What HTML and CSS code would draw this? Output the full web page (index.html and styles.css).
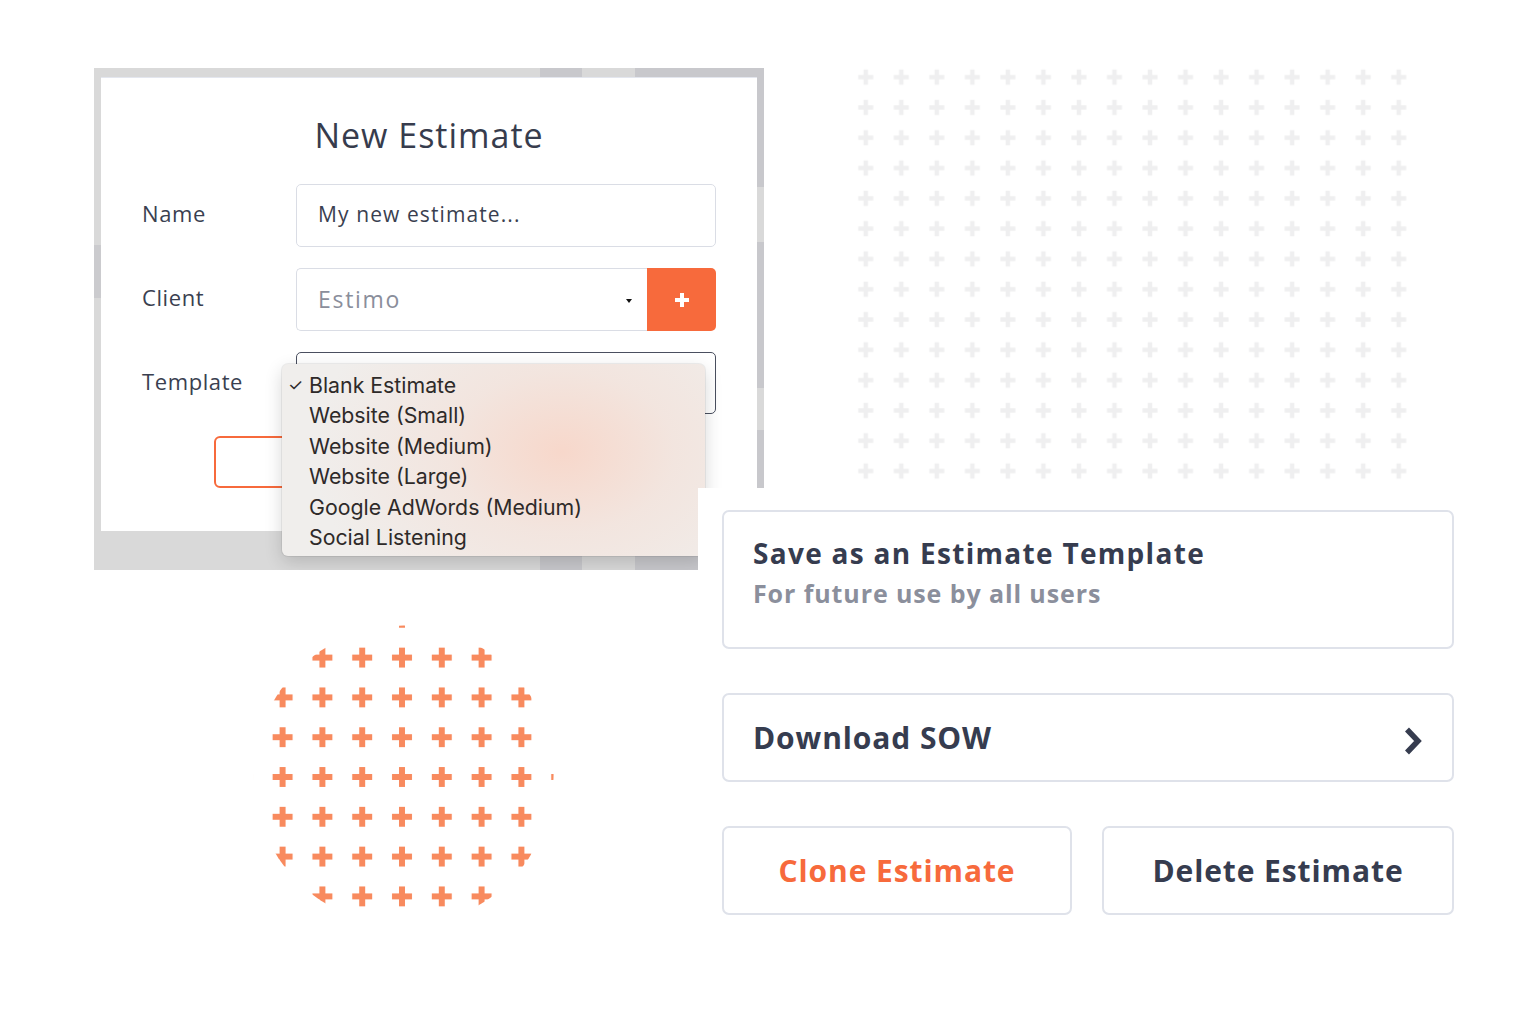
FILE: index.html
```html
<!DOCTYPE html>
<html lang="en">
<head>
<meta charset="utf-8">
<title>Estimate actions</title>
<link rel="stylesheet" href="styles.css">
</head>
<body>
<div class="stage">
  <div class="shot">
    <div class="modal">
      <h1 class="title">New Estimate</h1>
      <div class="form">
        <div class="label">Name</div>
        <div class="input">My new estimate...</div>
        <div class="label">Client</div>
        <div class="client">
          <div class="select">Estimo<span class="caret"></span></div>
          <div class="add">
            <svg width="16" height="16" viewBox="0 0 16 16"><path d="M8 1v14M1 8h14" stroke="#fff" stroke-width="4"/></svg>
          </div>
        </div>
        <div class="label">Template</div>
        <div class="tpl-field">
          <div class="tpl-select"></div>
          <ul class="menu">
            <li><span class="check">✓</span><span>Blank Estimate</span></li>
            <li><span class="check"></span><span>Website (Small)</span></li>
            <li><span class="check"></span><span>Website (Medium)</span></li>
            <li><span class="check"></span><span>Website (Large)</span></li>
            <li><span class="check"></span><span>Google AdWords (Medium)</span></li>
            <li><span class="check"></span><span>Social Listening</span></li>
          </ul>
        </div>
        <div class="actions">
          <span class="ghost"></span>
          <span class="ghost"></span>
        </div>
      </div>
    </div>
  </div>

  <svg class="grey-dots" width="569" height="424" viewBox="0 0 569 424">
    <defs>
      <pattern id="gp" width="35.53" height="30.3" patternUnits="userSpaceOnUse">
        <path d="M17.77 7.65v15M10.27 15.15h15" stroke="#efeff0" stroke-width="4.5"/>
      </pattern>
    </defs>
    <rect width="569" height="424" fill="url(#gp)"/>
  </svg>

  <div class="cards">
    <div class="card card-template">
      <div class="card-title">Save as an Estimate Template</div>
      <div class="card-sub">For future use by all users</div>
    </div>
    <div class="card card-row">
      <span class="card-label">Download SOW</span>
      <svg class="chev" width="22" height="30" viewBox="0 0 22 30"><path d="M5 3.5l11 11.5L5 26.5" fill="none" stroke="#363c4f" stroke-width="5.5"/></svg>
    </div>
    <div class="btn-row">
      <div class="card btn btn-clone">Clone Estimate</div>
      <div class="card btn btn-delete">Delete Estimate</div>
    </div>
  </div>

  <svg class="orange-dots" width="304" height="304" viewBox="0 0 304 304">
    <defs>
      <pattern id="op" x="12.7" y="12.7" width="39.8" height="39.8" patternUnits="userSpaceOnUse">
        <path d="M19.9 9.9v20M9.9 19.9h20" stroke="#f88a5e" stroke-width="6"/>
      </pattern>
      <clipPath id="oc"><circle cx="153.6" cy="150.6" r="150"/></clipPath>
    </defs>
    <rect width="304" height="304" fill="url(#op)" clip-path="url(#oc)"/>
  </svg>
</div>
</body>
</html>
```

FILE: styles.css
```css
html, body {
  margin: 0;
  padding: 0;
  background: #ffffff;
}

body {
  width: 1540px;
  height: 1024px;
  overflow: hidden;
  font-family: "Open Sans", "Noto Sans", sans-serif;
  color: #363c4f;
}

.stage {
  display: grid;
  grid-template-columns: 604px 24px 42px 84px 569px 37px;
  grid-template-rows: 420px 22px 60px auto;
  padding: 68px 0 0 94px;
}

/* ---------- screenshot of the modal ---------- */
.shot {
  grid-column: 1 / 4;
  grid-row: 1 / 4;
  position: relative;
  box-sizing: border-box;
  padding: 9px 7px 0;
  background-color: #d9d9d9;
  background-image:
    linear-gradient(to right, transparent 446px, #c8c8cc 446px, #c8c8cc 488px, transparent 488px, transparent 541px, #c8c8cc 541px),
    linear-gradient(to right, transparent 446px, #c8c8cc 446px, #c8c8cc 488px, transparent 488px, transparent 541px, #c8c8cc 541px),
    linear-gradient(to bottom, #c8c8cc 0, #c8c8cc 119px, transparent 119px, transparent 174px, #c8c8cc 174px, #c8c8cc 320px, transparent 320px, transparent 362px, #c8c8cc 362px),
    linear-gradient(to bottom, transparent 177px, #cbcbce 177px, #cbcbce 230px, transparent 230px);
  background-size: 100% 9px, 100% 39px, 7px 100%, 7px 100%;
  background-position: top left, bottom left, top right, top left;
  background-repeat: no-repeat;
  clip-path: polygon(0 0, 100% 0, 100% 420px, 604px 420px, 604px 100%, 0 100%);
}

.modal {
  box-sizing: border-box;
  width: 656px;
  height: 454px;
  padding: 36px 41px 0;
  background: #ffffff;
  border-top: 1px solid #e3e6ee;
}

.title {
  margin: 0 0 28px;
  font-weight: 400;
  font-size: 34px;
  line-height: 42px;
  letter-spacing: 1px;
  text-align: center;
  color: #373c4d;
}

.form {
  display: grid;
  grid-template-columns: 154px 420px;
  grid-template-rows: 63px 63px 63px 52px;
  row-gap: 21px;
}

.label {
  align-self: center;
  margin-top: -5px;
  font-size: 22px;
  letter-spacing: 0.6px;
  color: #3a3f50;
}

.input {
  box-sizing: border-box;
  display: flex;
  align-items: center;
  padding: 0 21px 4px;
  border: 1px solid #dadde5;
  border-radius: 5px;
  font-size: 21px;
  letter-spacing: 1.1px;
  color: #3a3f50;
}

.client {
  display: flex;
}

.select {
  flex: 1;
  box-sizing: border-box;
  display: flex;
  align-items: center;
  justify-content: space-between;
  padding: 0 15px 2px 21px;
  border: 1px solid #dadde5;
  border-right: none;
  border-radius: 5px 0 0 5px;
  font-size: 23px;
  letter-spacing: 1.7px;
  color: #8a8e9b;
}

.caret {
  width: 0;
  height: 0;
  border-left: 3.5px solid transparent;
  border-right: 3.5px solid transparent;
  border-top: 4px solid #111111;
  margin-top: 4px;
}

.add {
  width: 69px;
  display: flex;
  align-items: center;
  justify-content: center;
  background: #f76a3c;
  border-radius: 0 5px 5px 0;
}

.tpl-field {
  position: relative;
}

.tpl-select {
  box-sizing: border-box;
  height: 62px;
  border: 1.5px solid #4a4f5f;
  border-radius: 5px;
}

.menu {
  position: absolute;
  left: -14px;
  top: 12px;
  z-index: 2;
  box-sizing: border-box;
  width: 423px;
  height: 192px;
  margin: 0;
  padding: 6px 0 0;
  list-style: none;
  border-radius: 6px;
  background-color: #f0eeec;
  background-image: radial-gradient(ellipse 250px 180px at 280px 88px, rgba(248, 213, 199, 0.9), rgba(244, 223, 214, 0.6) 45%, rgba(240, 238, 236, 0) 100%);
  box-shadow: 0 0 0 1px rgba(0, 0, 0, 0.06), 0 6px 18px rgba(0, 0, 0, 0.16);
  font-family: "Inter", "Liberation Sans", sans-serif;
  font-size: 21.3px;
  line-height: 30.4px;
  color: #2e2a29;
}

.menu li {
  display: grid;
  grid-template-columns: 27px 1fr;
}

.check {
  padding-left: 6px;
  font-size: 17px;
  color: #2e2a29;
}

.actions {
  grid-column: 1 / -1;
  display: flex;
  justify-content: center;
  gap: 30px;
}

.ghost {
  box-sizing: border-box;
  width: 200px;
  height: 52px;
  border: 2px solid #f76a3c;
  border-radius: 6px;
}

/* ---------- decorative plus patterns ---------- */
.grey-dots {
  grid-column: 5;
  grid-row: 1;
  margin-top: -6px;
  display: block;
}

.orange-dots {
  grid-column: 1;
  grid-row: 4;
  margin: 55px 0 0 156px;
  display: block;
}

/* ---------- action cards ---------- */
.cards {
  grid-column: 3 / 7;
  grid-row: 3 / 5;
  display: flex;
  flex-direction: column;
  gap: 44px;
}

.card {
  box-sizing: border-box;
  border: 2px solid #dfe2ea;
  border-radius: 7px;
  background: #ffffff;
  font-weight: 700;
  color: #363c4f;
}

.card-template {
  height: 139px;
  padding: 23px 29px 0;
}

.card-title {
  font-size: 28px;
  line-height: 36px;
  letter-spacing: 1.3px;
}

.card-sub {
  margin-top: 5px;
  font-size: 25px;
  line-height: 34px;
  letter-spacing: 0.9px;
  color: #8b8f9c;
}

.card-row {
  height: 89px;
  display: flex;
  align-items: center;
  justify-content: space-between;
  padding: 0 28px 0 29px;
}

.card-label {
  font-size: 30px;
  letter-spacing: 0.9px;
}

.chev {
  display: block;
  margin-top: 6px;
}

.btn-row {
  display: flex;
  gap: 30px;
}

.btn {
  height: 89px;
  display: flex;
  align-items: center;
  justify-content: center;
  font-size: 30px;
  letter-spacing: 0.9px;
}

.btn-clone {
  width: 350px;
  color: #f76a3c;
}

.btn-delete {
  width: 352px;
  color: #363c4f;
}
```
